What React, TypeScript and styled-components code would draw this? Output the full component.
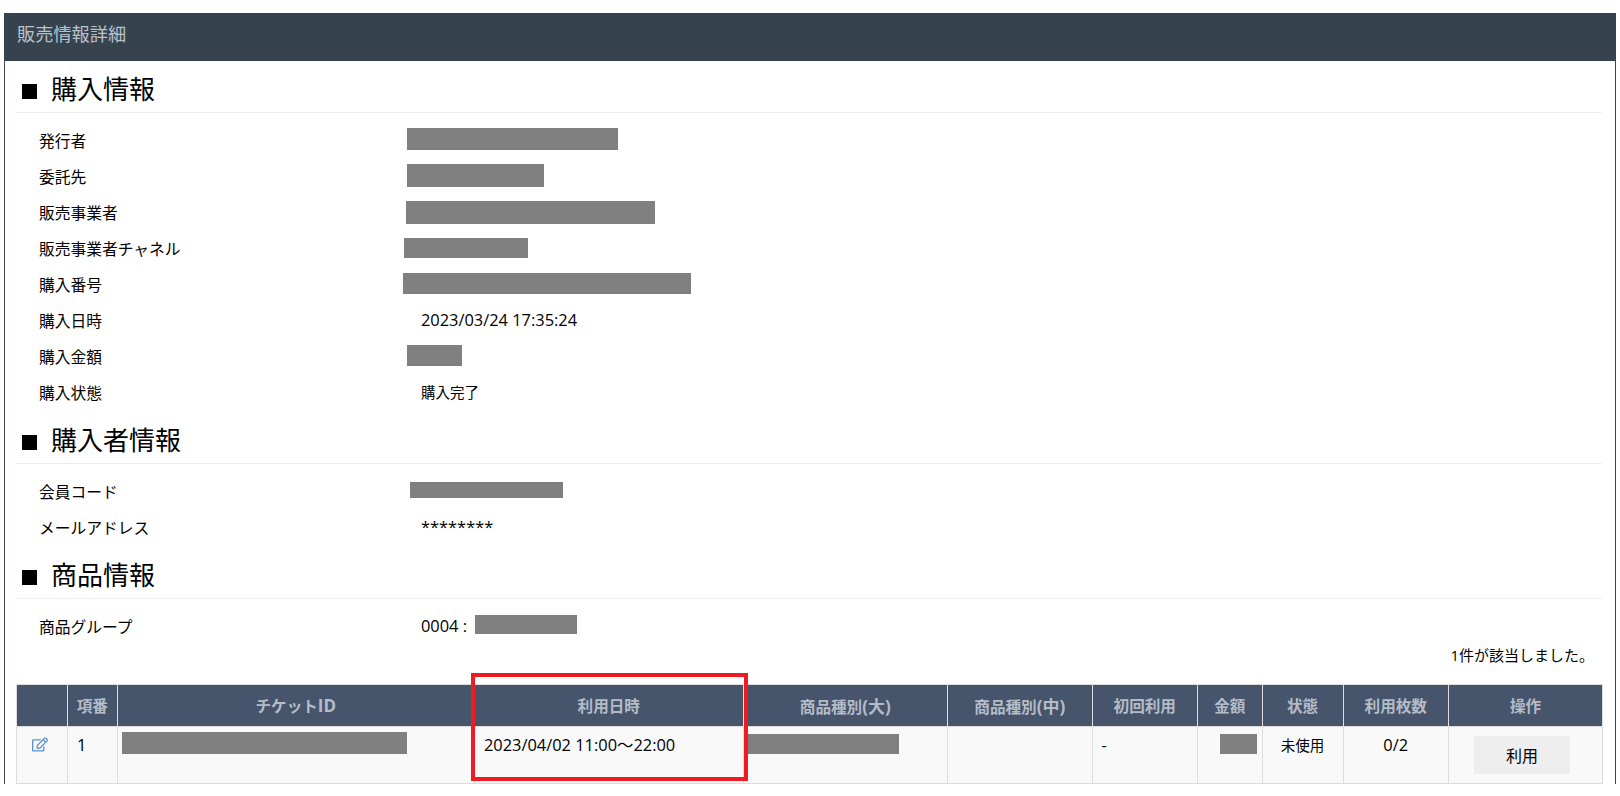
import React from "react";
import styled, { createGlobalStyle } from "styled-components";
import { FaRegEdit } from "react-icons/fa";

const GlobalStyle = createGlobalStyle`
  html, body {
    margin: 0;
    padding: 0;
    background: #fff;
  }
  body {
    font-family: "Open Sans", "Noto Sans CJK JP", sans-serif;
    color: #000;
    overflow: hidden;
  }
`;

const Page = styled.div`
  position: relative;
  height: 796px;
  padding: 13px 4px 0;
  box-sizing: border-box;
`;

const Panel = styled.div`
  border-left: 1px solid #3a4553;
  border-right: 1px solid #3a4553;
`;

const PanelHeader = styled.div`
  height: 48px;
  margin: 0 -1px;
  padding-left: 13px;
  background: #37424f;
  color: #b9c1ca;
  font-size: 18.2px;
  line-height: 42px;
`;

const PanelBody = styled.div`
  padding: 0 13px 0 11px;
`;

const SectionTitle = styled.h2`
  display: flex;
  align-items: center;
  gap: 14px;
  height: 52px;
  margin: 0;
  padding: 5px 0 0 6px;
  box-sizing: border-box;
  border-bottom: 1px solid #eee;
  font-size: 26px;
  font-weight: 400;
  line-height: 46px;
`;

const Square = styled.span`
  width: 15px;
  height: 15px;
  margin-top: 5px;
  background: #000;
`;

const InfoList = styled.div`
  padding: 11px 0 0 23px;
`;

const InfoRow = styled.div`
  display: grid;
  grid-template-columns: 382px 1fr;
  height: 36px;
`;

const Label = styled.div`
  font-size: 15.75px;
  line-height: 35px;
`;

const Value = styled.div`
  position: relative;
  font-size: 16.4px;
  line-height: 32px;
`;

// the reference's Japanese glyphs run smaller than its Latin ones
const Kanji = styled.span`
  font-size: 14.5px;
`;

const Latin = styled.span`
  font-size: 17px;
`;

const Redact = styled.div<{ $x: number; $y: number; $w: number; $h: number }>`
  position: absolute;
  left: ${(p) => p.$x}px;
  top: ${(p) => p.$y}px;
  width: ${(p) => p.$w}px;
  height: ${(p) => p.$h}px;
  background: #808080;
`;

const ResultCount = styled.div`
  height: 38px;
  padding-right: 8px;
  text-align: right;
  font-size: 15px;
  line-height: 19px;
`;

const Table = styled.table`
  width: 1586px;
  border-collapse: collapse;
  table-layout: fixed;
`;

const Th = styled.th`
  height: 41px;
  padding: 0;
  background: #46556c;
  border: 1px solid #ddd;
  color: #b4bcc8;
  font-size: 15.6px;
  font-weight: 700;
  text-align: center;
`;

const Td = styled.td<{ $center?: boolean }>`
  position: relative;
  height: 57px;
  padding: 6px 9px 0;
  box-sizing: border-box;
  vertical-align: top;
  background: #f9f9f9;
  border: 1px solid #ddd;
  font-size: 16.4px;
  line-height: 24px;
  text-align: ${(p) => (p.$center ? "center" : "left")};
`;

const EditIcon = styled(FaRegEdit)`
  display: block;
  width: 16px;
  height: 15px;
  margin: 4px 0 0 6px;
  color: #5b93d6;
`;

const UseButton = styled.button`
  display: block;
  width: 96px;
  height: 38px;
  margin: 3px 0 0 16px;
  padding: 0;
  border: none;
  background: #eee;
  color: #000;
  font-family: inherit;
  font-size: 16px;
`;

const Callout = styled.div`
  position: absolute;
  left: 471px;
  top: 673px;
  width: 277px;
  height: 108px;
  box-sizing: border-box;
  border: 4.5px solid #ed1c24;
  pointer-events: none;
`;

const columns = [51, 49.5, 357.5, 268.5, 204.5, 144.5, 105.5, 64.5, 81, 105.5, 154];
const headers = [
  "",
  "項番",
  <>チケット<Latin>ID</Latin></>,
  "利用日時",
  <>商品種別<Latin>(大)</Latin></>,
  <>商品種別<Latin>(中)</Latin></>,
  "初回利用",
  "金額",
  "状態",
  "利用枚数",
  "操作",
];

export default function App() {
  return (
    <>
      <GlobalStyle />
      <Page>
        <Panel>
          <PanelHeader>販売情報詳細</PanelHeader>
          <PanelBody>
            <SectionTitle><Square />購入情報</SectionTitle>
            <InfoList>
              <InfoRow>
                <Label>発行者</Label>
                <Value><Redact $x={-14} $y={4} $w={211} $h={22} /></Value>
              </InfoRow>
              <InfoRow>
                <Label>委託先</Label>
                <Value><Redact $x={-14} $y={4} $w={137} $h={23} /></Value>
              </InfoRow>
              <InfoRow>
                <Label>販売事業者</Label>
                <Value><Redact $x={-15} $y={5} $w={249} $h={23} /></Value>
              </InfoRow>
              <InfoRow>
                <Label>販売事業者チャネル</Label>
                <Value><Redact $x={-17} $y={6} $w={124} $h={20} /></Value>
              </InfoRow>
              <InfoRow>
                <Label>購入番号</Label>
                <Value><Redact $x={-18} $y={5} $w={288} $h={21} /></Value>
              </InfoRow>
              <InfoRow>
                <Label>購入日時</Label>
                <Value>2023/03/24 17:35:24</Value>
              </InfoRow>
              <InfoRow>
                <Label>購入金額</Label>
                <Value><Redact $x={-14} $y={5} $w={55} $h={21} /></Value>
              </InfoRow>
              <InfoRow>
                <Label>購入状態</Label>
                <Value><Kanji>購入完了</Kanji></Value>
              </InfoRow>
            </InfoList>

            <SectionTitle><Square />購入者情報</SectionTitle>
            <InfoList>
              <InfoRow>
                <Label>会員コード</Label>
                <Value><Redact $x={-11} $y={7} $w={153} $h={16} /></Value>
              </InfoRow>
              <InfoRow>
                <Label>メールアドレス</Label>
                <Value>********</Value>
              </InfoRow>
            </InfoList>

            <SectionTitle><Square />商品情報</SectionTitle>
            <InfoList>
              <InfoRow>
                <Label>商品グループ</Label>
                <Value>0004 : <Redact $x={54} $y={5} $w={102} $h={19} /></Value>
              </InfoRow>
            </InfoList>

            <ResultCount>1件が該当しました。</ResultCount>

            <Table>
              <colgroup>
                {columns.map((w, i) => <col key={i} style={{ width: w }} />)}
              </colgroup>
              <thead>
                <tr>{headers.map((h, i) => <Th key={i}>{h}</Th>)}</tr>
              </thead>
              <tbody>
                <tr>
                  <Td><EditIcon /></Td>
                  <Td>1</Td>
                  <Td><Redact $x={4} $y={5} $w={285} $h={22} /></Td>
                  <Td>2023/04/02 11:00～22:00</Td>
                  <Td><Redact $x={3} $y={7} $w={152} $h={20} /></Td>
                  <Td />
                  <Td>-</Td>
                  <Td><Redact $x={22} $y={7} $w={37} $h={20} /></Td>
                  <Td $center><Kanji>未使用</Kanji></Td>
                  <Td $center>0/2</Td>
                  <Td><UseButton>利用</UseButton></Td>
                </tr>
              </tbody>
            </Table>
          </PanelBody>
        </Panel>
        <Callout />
      </Page>
    </>
  );
}
